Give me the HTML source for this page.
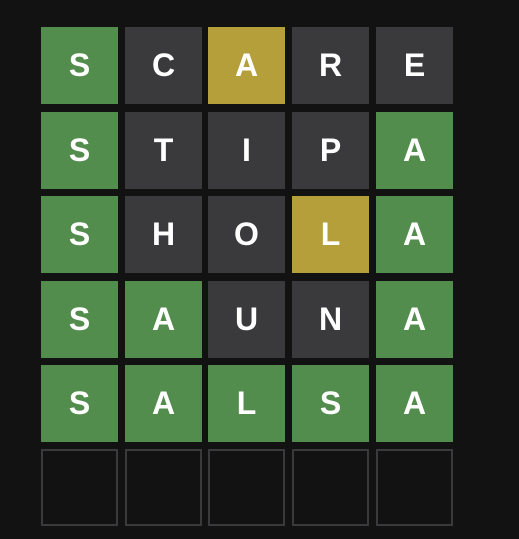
<!DOCTYPE html>
<html><head><style>
html,body{margin:0;padding:0;background:#121213;width:519px;height:539px;overflow:hidden}
.t{position:absolute;width:77px;height:77px;box-sizing:border-box;display:flex;align-items:center;justify-content:center;color:#fff;font:bold 32px "Liberation Sans",sans-serif}
.g{background:#538d4e}.y{background:#b59f3b}.d{background:#3a3a3c}.e{border:2px solid #3a3a3c}
</style></head><body>
<script>
const rows=[["S g","C d","A y","R d","E d"],["S g","T d","I d","P d","A g"],["S g","H d","O d","L y","A g"],["S g","A g","U d","N d","A g"],["S g","A g","L g","S g","A g"],[" e"," e"," e"," e"," e"]];
const xs=[41,125,208,292,376],ys=[27,112,196,281,365,449];
let h="";rows.forEach((r,i)=>r.forEach((c,j)=>{const[l,k]=c.split(" ");h+=`<div class="t ${k}" style="left:${xs[j]}px;top:${ys[i]}px">${l}</div>`}));
document.write(h);
</script>
</body></html>
